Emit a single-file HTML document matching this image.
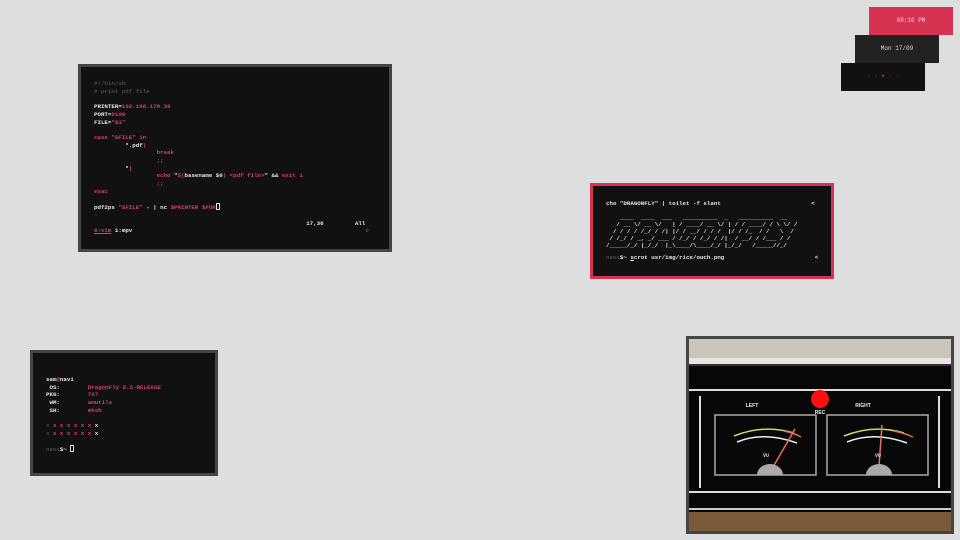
<!DOCTYPE html>
<html><head><meta charset="utf-8"><style>
*{margin:0;padding:0;box-sizing:border-box}
body{width:960px;height:540px;background:#dedede;position:relative;overflow:hidden;font-family:"Liberation Mono",monospace}
.box{position:absolute}
.t{position:absolute;background:#111;border:3px solid #444}
pre{position:absolute;font-family:"Liberation Mono",monospace;font-size:5.8px;line-height:7.7px;color:#e6e6e6;white-space:pre;font-weight:bold}
.p{color:#d0406a}.g{color:#4a4a4a}.w{color:#ddd}
.cur{display:inline-block;width:4px;height:7px;border:1px solid #ddd;vertical-align:-1px}
</style></head><body>
<div class="box" style="left:869px;top:7px;width:84px;height:28px;background:#d63352;color:#f3d0d8;font-size:6px;text-align:center;line-height:28px">08:16 PM</div>
<div class="box" style="left:855px;top:35px;width:84px;height:28px;background:#222;color:#ddd;font-size:6px;text-align:center;line-height:28px">Mon 17/09</div>
<div class="box" style="left:841px;top:63px;width:84px;height:28px;background:#111;font-size:6px;text-align:center;line-height:28px;font-weight:bold"><span style="color:#444">- - </span><span style="color:#d63352">+</span><span style="color:#333"> - -</span></div>

<div class="t" style="left:78px;top:64px;width:314px;height:188px"></div>
<pre style="left:94px;top:80px"><span class="g">#!/bin/sh
# print pdf file</span>

PRINTER=<span class="p">192.168.178.36</span>
PORT=<span class="p">9100</span>
FILE=<span class="p">"$1"</span>

<span class="p">case</span> <span class="p">"$FILE"</span> <span class="p">in</span>
         *.pdf<span class="p">)</span>
                  <span class="p">break</span>
                  <span class="p">;;</span>
         *<span class="p">)</span>
                  <span class="p">echo</span> "<span class="p">$(</span>basename $0<span class="p">)</span> <span class="p">&lt;pdf file&gt;</span>" &amp;&amp; <span class="p">exit 1</span>
                  <span class="p">;;</span>
<span class="p">esac</span>

pdf2ps <span class="p">"$FILE"</span> - | nc <span class="p">$PRINTER $POR</span><span class="cur"></span>
<span class="g">~</span>
                                                             17,36         All
<span class="p" style="text-decoration:underline">0:vim</span> 1:mpv                                                                   <span class="g">0</span></pre>

<div class="t" style="left:590px;top:183px;width:244px;height:96px;border-color:#d63352"></div>
<pre style="left:606px;top:200px;line-height:7px">cho "DRAGONFLY" | toilet -f slant                          &lt;

    ____  ____  ___   __________  _   __________  __
   / __ \/ __ \/   | / ____/ __ \/ | / / ____/ / \ \/ /
  / / / / /_/ / /| |/ / __/ / / /  |/ / /_  / /   \  /
 / /_/ / _, _/ ___ / /_/ / /_/ / /|  / __/ / /___ / /
/_____/_/ |_/_/  |_\____/\____/_/ |_/_/   /_____//_/</pre>
<pre style="left:606px;top:254px"><span class="g">navi</span>$~ <u>s</u>crot usr/img/rice/ouch.png                          &lt;</pre>

<div class="t" style="left:30px;top:350px;width:188px;height:126px"></div>
<pre style="left:46px;top:376px">sam<span class="p">@</span>navi
 OS:        <span class="p">DragonFly 5.2-RELEASE</span>
PKG:        <span class="p">727</span>
 WM:        <span class="p">wmutils</span>
 SH:        <span class="p">mksh</span>

<span class="g">x</span> <span class="p">x x x x x x</span> x
<span class="g">x</span> <span class="p">x x x x x x</span> x

<span class="g">navi</span>$~ <span class="cur"></span></pre>

<div class="t" style="left:686px;top:336px;width:268px;height:198px;overflow:hidden;background:#080808">
<svg width="262" height="192" viewBox="0 0 262 192" style="position:absolute;left:0;top:0">
<rect x="0" y="0" width="262" height="20" fill="#c9c5bd"/>
<rect x="0" y="19" width="262" height="6" fill="#e8e6e0"/>
<rect x="0" y="25" width="262" height="2" fill="#333"/>
<rect x="0" y="50" width="262" height="2" fill="#ddd"/>
<rect x="0" y="152" width="262" height="2" fill="#ddd"/>
<rect x="0" y="169" width="262" height="2" fill="#ccc"/>
<rect x="0" y="173" width="262" height="19" fill="#7a5a38"/>
<rect x="10" y="57" width="2" height="92" fill="#ddd"/>
<rect x="249" y="57" width="2" height="92" fill="#ddd"/>
<circle cx="131" cy="60" r="9" fill="#ff1010"/>
<text x="131" y="75" font-size="5" fill="#eee" text-anchor="middle" font-family="Liberation Sans" font-weight="bold">REC</text>
<text x="63" y="68" font-size="5" fill="#eee" text-anchor="middle" font-family="Liberation Sans" font-weight="bold">LEFT</text>
<text x="174" y="68" font-size="5" fill="#eee" text-anchor="middle" font-family="Liberation Sans" font-weight="bold">RIGHT</text>
<g fill="none" stroke="#aaa" stroke-width="1.5"><rect x="26" y="76" width="101" height="60"/><rect x="138" y="76" width="101" height="60"/></g>
<g fill="none" stroke-width="1.5">
<path d="M45 97 Q75 85 105 94" stroke="#c5d86a"/><path d="M95 92 Q105 94 112 98" stroke="#e8705a"/>
<path d="M48 103 Q75 92 108 104" stroke="#eee"/>
<path d="M155 97 Q185 85 215 94" stroke="#c5d86a"/><path d="M205 92 Q215 94 224 98" stroke="#e8705a"/>
<path d="M158 103 Q185 92 218 104" stroke="#eee"/>
<path d="M84 128 L106 90" stroke="#e8705a"/><path d="M190 127 L193 86" stroke="#e8705a"/>
</g>
<text x="77" y="118" font-size="5" fill="#ddd" text-anchor="middle" font-weight="bold">VU</text>
<text x="189" y="118" font-size="5" fill="#ddd" text-anchor="middle" font-weight="bold">VU</text>
<path d="M68 136 A13 11 0 0 1 94 136Z" fill="#aaa"/>
<path d="M177 136 A13 11 0 0 1 203 136Z" fill="#aaa"/>
</svg></div>
</body></html>
